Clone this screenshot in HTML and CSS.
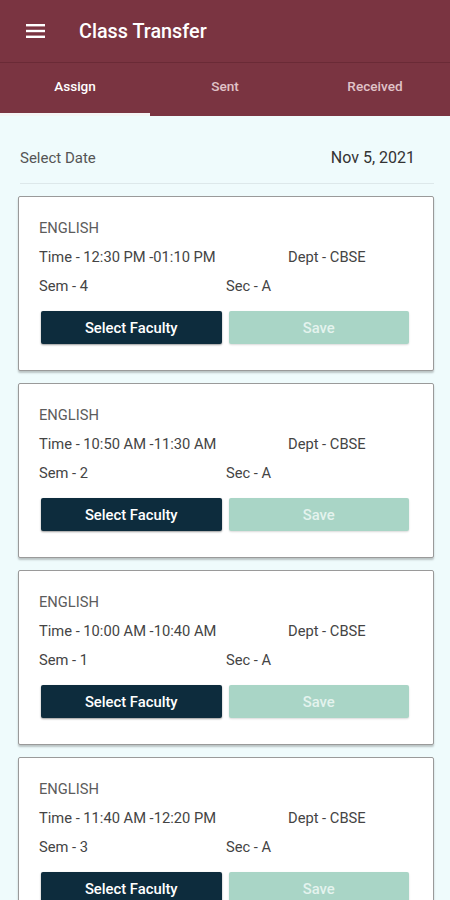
FILE: index.html
```html
<!DOCTYPE html>
<html>
<head>
    <title>Class Transfer</title>
    <link rel="stylesheet" href="styles.css">
</head>
<body>
    <header class="appbar">
        <div class="toolbar">
            <svg class="menu-icon" width="20" height="14" viewBox="0 0 20 14">
                <rect x="0" y="0" width="19" height="2.4" fill="#fff"/>
                <rect x="0" y="5.8" width="19" height="2.4" fill="#fff"/>
                <rect x="0" y="11.6" width="19" height="2.4" fill="#fff"/>
            </svg>
            <h1>Class Transfer</h1>
        </div>
        <nav class="tabs">
            <div class="tab active">Assign</div>
            <div class="tab">Sent</div>
            <div class="tab">Received</div>
        </nav>
    </header>

    <main class="content">
        <div class="date-row">
            <span class="date-label">Select Date</span>
            <span class="date-value">Nov 5, 2021</span>
        </div>

        <div class="card">
            <div class="subject">ENGLISH</div>
            <div class="row time-row">
                <span>Time - 12:30 PM -01:10 PM</span>
                <span>Dept - CBSE</span>
            </div>
            <div class="row sem-row">
                <span>Sem - 4</span>
                <span>Sec - A</span>
            </div>
            <div class="actions">
                <button class="btn-faculty">Select Faculty</button>
                <button class="btn-save">Save</button>
            </div>
        </div>

        <div class="card">
            <div class="subject">ENGLISH</div>
            <div class="row time-row">
                <span>Time - 10:50 AM -11:30 AM</span>
                <span>Dept - CBSE</span>
            </div>
            <div class="row sem-row">
                <span>Sem - 2</span>
                <span>Sec - A</span>
            </div>
            <div class="actions">
                <button class="btn-faculty">Select Faculty</button>
                <button class="btn-save">Save</button>
            </div>
        </div>

        <div class="card">
            <div class="subject">ENGLISH</div>
            <div class="row time-row">
                <span>Time - 10:00 AM -10:40 AM</span>
                <span>Dept - CBSE</span>
            </div>
            <div class="row sem-row">
                <span>Sem - 1</span>
                <span>Sec - A</span>
            </div>
            <div class="actions">
                <button class="btn-faculty">Select Faculty</button>
                <button class="btn-save">Save</button>
            </div>
        </div>

        <div class="card">
            <div class="subject">ENGLISH</div>
            <div class="row time-row">
                <span>Time - 11:40 AM -12:20 PM</span>
                <span>Dept - CBSE</span>
            </div>
            <div class="row sem-row">
                <span>Sem - 3</span>
                <span>Sec - A</span>
            </div>
            <div class="actions">
                <button class="btn-faculty">Select Faculty</button>
                <button class="btn-save">Save</button>
            </div>
        </div>
    </main>
</body>
</html>
```

FILE: styles.css
```css
body {
    margin: 0;
    font-family: Roboto, "Liberation Sans", sans-serif;
    background: #effbfc;
    overflow: hidden;
}
.appbar {
    background: #7a3441;
    color: #fff;
}
.toolbar {
    height: 62px;
    display: flex;
    align-items: center;
    padding-left: 26px;
    border-bottom: 1px solid #6a2a36;
}
.menu-icon {
    margin-right: 33px;
}
.toolbar h1 {
    margin: 0;
    font-size: 19.8px;
    font-weight: 500;
}
.tabs {
    display: grid;
    grid-template-columns: repeat(3, 1fr);
    height: 53px;
}
.tab {
    display: flex;
    align-items: center;
    justify-content: center;
    font-size: 13.6px;
    font-weight: 500;
    color: #e0c3c8;
    border-bottom: 3px solid transparent;
    padding-bottom: 4px;
}
.tab.active {
    color: #fff;
    border-bottom-color: #f4f4f4;
}
.content {
    padding: 0 16px 0 18px;
}
.date-row {
    display: flex;
    justify-content: space-between;
    align-items: center;
    height: 51px;
    padding: 16px 19px 0 0;
    margin: 0 0 12px 2px;
    border-bottom: 1px solid #dde8ea;
}
.date-label {
    color: #555;
    font-size: 15px;
}
.date-value {
    color: #333;
    font-size: 16px;
}
.card {
    background: #fff;
    border: 1px solid #9a9a9a;
    border-radius: 2px;
    box-shadow: 0 2px 2px rgba(0, 0, 0, 0.22);
    padding: 21px 24px 26px 20px;
    margin-bottom: 12px;
}
.subject {
    font-size: 14.7px;
    color: #5c5c5c;
    height: 20px;
    line-height: 20px;
}
.row {
    display: grid;
    font-size: 14.7px;
    color: #444;
    height: 29px;
    line-height: 29px;
}
.time-row {
    grid-template-columns: 249px 1fr;
    margin-top: 5px;
}
.sem-row {
    grid-template-columns: 187px 1fr;
}
.actions {
    display: grid;
    grid-template-columns: 1fr 1fr;
    gap: 7px;
    margin: 10px 0 0 2px;
}
button {
    height: 33px;
    border: none;
    border-radius: 2px;
    color: #fff;
    font-family: inherit;
    font-size: 14.8px;
    font-weight: 500;
}
.btn-faculty {
    background: #0d2c3d;
    box-shadow: 0 1px 2px rgba(0, 0, 0, 0.4);
}
.btn-save {
    background: #a9d5c6;
    color: #e4f3ee;
    box-shadow: 0 1px 2px rgba(0, 0, 0, 0.15);
}
```
